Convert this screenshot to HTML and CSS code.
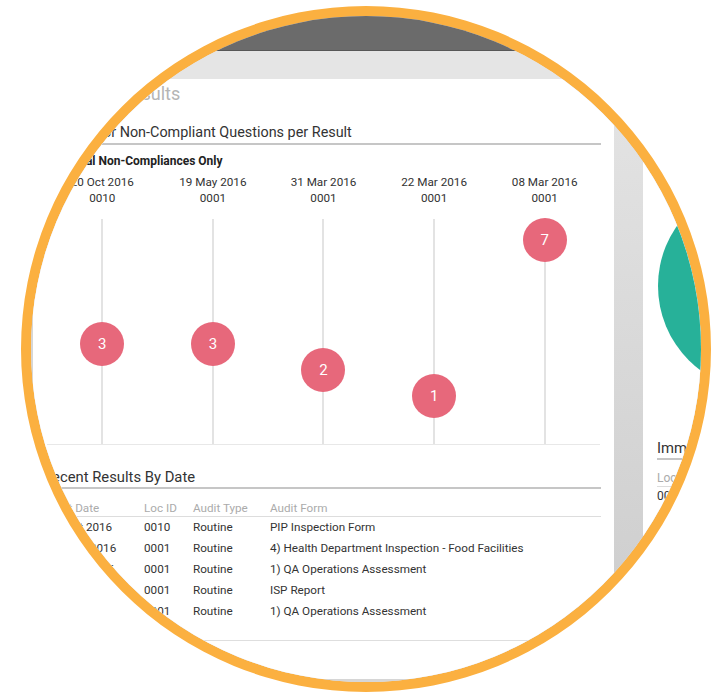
FILE: index.html
```html
<!DOCTYPE html>
<html>
<head>
<meta charset="utf-8">
<title>Results</title>
<link rel="stylesheet" href="styles.css">
</head>
<body>
<div class="lens">
  <div class="screen">
    <div class="topbar"></div>
    <div class="band"></div>
    <div class="main">
      <section class="card card-left">
        <h1 class="page-title">Recent Results</h1>
        <h2 class="section-title chart-title">Number for Non-Compliant Questions per Result</h2>
        <div class="subtitle">Critical Non-Compliances Only</div>
        <div class="chart">
          <div class="col">
            <div class="date">20 Oct 2016</div>
            <div class="loc">0010</div>
            <div class="stem"><span class="bubble" style="top:103px">3</span></div>
          </div>
          <div class="col">
            <div class="date">19 May 2016</div>
            <div class="loc">0001</div>
            <div class="stem"><span class="bubble" style="top:103px">3</span></div>
          </div>
          <div class="col">
            <div class="date">31 Mar 2016</div>
            <div class="loc">0001</div>
            <div class="stem"><span class="bubble" style="top:129px">2</span></div>
          </div>
          <div class="col">
            <div class="date">22 Mar 2016</div>
            <div class="loc">0001</div>
            <div class="stem"><span class="bubble" style="top:155px">1</span></div>
          </div>
          <div class="col">
            <div class="date">08 Mar 2016</div>
            <div class="loc">0001</div>
            <div class="stem"><span class="bubble" style="top:-1px">7</span></div>
          </div>
        </div>
        <h2 class="section-title table-title">Recent Results By Date</h2>
        <table class="results">
          <thead>
            <tr><th class="c-date">Audit Date</th><th class="c-loc">Loc ID</th><th class="c-type">Audit Type</th><th>Audit Form</th></tr>
          </thead>
          <tbody>
            <tr><td class="c-date">20 Oct 2016</td><td>0010</td><td>Routine</td><td>PIP Inspection Form</td></tr>
            <tr><td class="c-date">19 May 2016</td><td>0001</td><td>Routine</td><td>4) Health Department Inspection - Food Facilities</td></tr>
            <tr><td class="c-date">31 Mar 2016</td><td>0001</td><td>Routine</td><td>1) QA Operations Assessment</td></tr>
            <tr><td class="c-date">22 Mar 2016</td><td>0001</td><td>Routine</td><td>ISP Report</td></tr>
            <tr><td class="c-date">08 Mar 2016</td><td>0001</td><td>Routine</td><td>1) QA Operations Assessment</td></tr>
          </tbody>
        </table>
        <div class="table-foot"></div>
      </section>
      <div class="gutter"></div>
      <section class="card card-right">
        <svg class="pie" width="240" height="330" viewBox="0 0 240 330">
          <circle cx="106" cy="186" r="105" fill="#27b199"/>
        </svg>
        <h2 class="section-title side-title">Imme</h2>
        <table class="side-table">
          <thead><tr><th>Loc</th></tr></thead>
          <tbody><tr><td>00</td></tr></tbody>
        </table>
      </section>
    </div>
  </div>
</div>
</body>
</html>
```

FILE: styles.css
```css
* { box-sizing: border-box; }

html, body {
  margin: 0;
  padding: 0;
  background: #ffffff;
}

body {
  font-family: Roboto, "Liberation Sans", sans-serif;
  color: #333333;
}

.lens {
  width: 690px;
  height: 686px;
  margin: 6px 0 0 21px;
  border: 10px solid #fbb040;
  border-radius: 50%;
  overflow: hidden;
  background: #e4e4e4;
}

.screen {
  width: 700px;
  height: 100%;
  display: flex;
  flex-direction: column;
}

.topbar {
  height: 35px;
  background: #6b6b6b;
  border-bottom: 1px solid #575757;
  flex: none;
}

.band {
  height: 28px;
  background: #e5e5e5;
  flex: none;
}

.main {
  flex: 1;
  display: flex;
  padding-left: 2px;
  background: #d6d6d6;
}

.card {
  background: #ffffff;
}

.card-left {
  width: 581px;
  height: 600px;
  flex: none;
  padding: 5px 13px 0 10px;
}

.gutter {
  width: 29px;
  flex: none;
  background: linear-gradient(#e4e4e4, #cbcbcb);
}

.card-right {
  flex: 1;
  padding: 21px 0 0 14px;
}

.page-title {
  margin: 0;
  font-size: 18px;
  line-height: 20px;
  font-weight: 400;
  color: #b5b5b5;
  padding-left: 18px;
}

.section-title {
  margin: 20px 0 0;
  font-size: 14.8px;
  line-height: 18px;
  font-weight: 400;
  color: #333333;
  padding-bottom: 1px;
  border-bottom: 2px solid #c6c6c6;
  white-space: nowrap;
}

.chart-title {
  font-size: 14.4px;
}

.subtitle {
  margin-top: 8px;
  padding-left: 14px;
  font-size: 12px;
  line-height: 16px;
  font-weight: 700;
  color: #222222;
}

.chart {
  margin: 5px 1px 0 4px;
  display: grid;
  grid-template-columns: repeat(5, 1fr);
  border-bottom: 1px solid #e8e8e8;
}

.col {
  text-align: center;
  font-size: 11.7px;
  line-height: 16px;
  color: #333333;
}

.stem {
  position: relative;
  height: 225px;
  margin-top: 13px;
}

.stem::before {
  content: "";
  display: block;
  width: 2px;
  height: 100%;
  margin: 0 auto;
  background: #e3e3e3;
}

.bubble {
  position: absolute;
  left: 50%;
  width: 44px;
  height: 44px;
  margin-left: -22px;
  border-radius: 50%;
  background: #e7687b;
  color: #ffffff;
  font-size: 15px;
  line-height: 44px;
  text-align: center;
}

.table-title {
  margin-top: 23px;
}

.results {
  margin-top: 11px;
  width: 100%;
  border-collapse: collapse;
  font-size: 11.7px;
}

.results th {
  font-weight: 400;
  color: #ababab;
  text-align: left;
  padding: 0;
  height: 16px;
  line-height: 16px;
  border-bottom: 1px solid #dddddd;
}

.results td {
  padding: 0;
  height: 21px;
  line-height: 21px;
  color: #333333;
  white-space: nowrap;
}

.results th.c-date { width: 101px; padding-left: 2px; }
.results td.c-date { padding-left: 6px; }
.results .c-loc { width: 49px; }
.results .c-type { width: 77px; }

.table-foot {
  margin-top: 18px;
  border-top: 1px solid #dedede;
}

.pie {
  display: block;
}

.side-title {
  margin-top: 9px;
  width: 200px;
}

.side-table {
  margin-top: 10px;
  width: 200px;
  border-collapse: collapse;
  font-size: 12px;
}

.side-table th {
  font-weight: 400;
  color: #ababab;
  text-align: left;
  padding: 0;
  height: 16px;
  line-height: 16px;
  border-bottom: 1px solid #dddddd;
}

.side-table td {
  padding: 0;
  height: 18px;
  line-height: 18px;
}
```
